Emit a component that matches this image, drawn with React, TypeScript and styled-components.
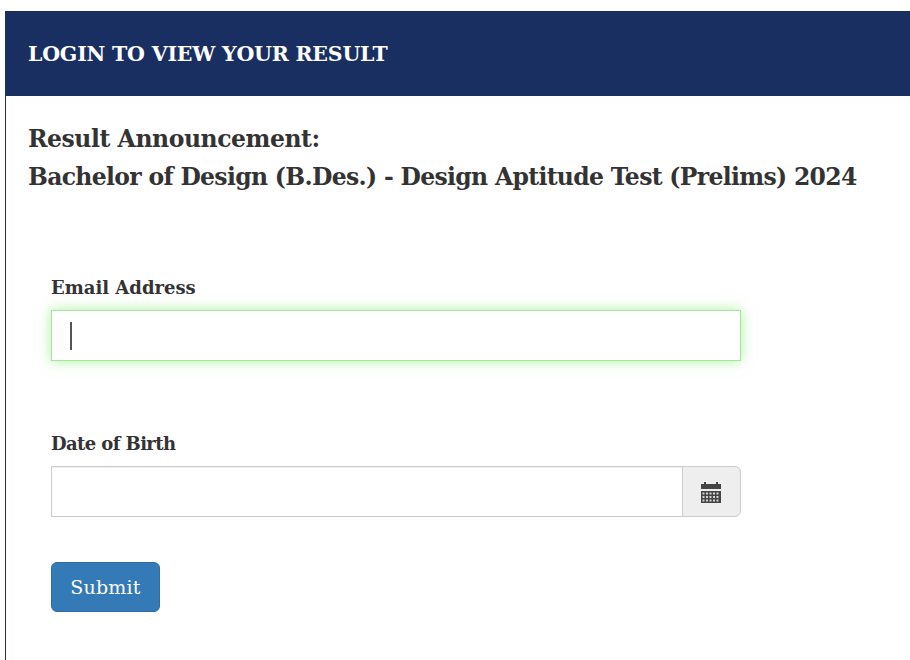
import React from 'react';
import styled, { createGlobalStyle } from 'styled-components';

const SLAB = '"DejaVu Serif", "Liberation Serif", serif';

const GlobalStyle = createGlobalStyle`
  html, body {
    margin: 0;
    padding: 0;
    background: #fff;
    overflow: hidden;
  }
  body {
    font-family: ${SLAB};
    color: #333;
  }
`;

const Page = styled.div`
  width: 910px;
  height: 660px;
  padding: 11px 0 0 5px;
  box-sizing: border-box;
  overflow: hidden;
`;

const Panel = styled.section`
  width: 920px;
  height: 660px;
  border-left: 1px solid #1b2f60;
  box-sizing: border-box;
`;

const PanelHeader = styled.h2`
  margin: 0 0 0 -1px;
  height: 85px;
  padding-left: 23px;
  display: flex;
  align-items: center;
  background: #1a2f61;
  color: #fff;
  font-size: 20.5px;
  font-weight: 700;
  letter-spacing: -0.2px;
`;

const PanelBody = styled.div`
  padding: 24px 0 0 22px;
`;

const Title = styled.h3`
  margin: 0;
  font-size: 23.5px;
  line-height: 38px;
  font-weight: 700;
  color: #333;
  white-space: nowrap;
`;

const TitleLine = styled.span<{ $tracking: number }>`
  display: block;
  letter-spacing: ${(p) => p.$tracking}px;
`;

const LoginForm = styled.form`
  padding: 79px 0 0 23px;
  width: 690px;
  display: flex;
  flex-direction: column;
`;

const Field = styled.div<{ $gap: number }>`
  margin-bottom: ${(p) => p.$gap}px;
`;

const Label = styled.label<{ $tracking: number }>`
  display: block;
  margin-bottom: 10px;
  font-size: 18px;
  line-height: 25px;
  font-weight: 700;
  letter-spacing: ${(p) => p.$tracking}px;
  color: #333;
`;

const EmailInput = styled.div`
  height: 51px;
  box-sizing: border-box;
  border: 1px solid #a3e89a;
  background: #fff;
  box-shadow: 0 0 12px rgba(102, 230, 80, 0.55);
  display: flex;
  align-items: center;
  padding-left: 18px;
`;

const Caret = styled.span`
  width: 2px;
  height: 28px;
  background: #555;
`;

const InputGroup = styled.div`
  display: flex;
  height: 51px;
`;

const DateInput = styled.div`
  flex: 1;
  box-sizing: border-box;
  border: 1px solid #ccc;
  border-right: 0;
  background: #fff;
  box-shadow: inset 0 1px 1px rgba(0, 0, 0, 0.075);
`;

const Addon = styled.span`
  width: 59px;
  box-sizing: border-box;
  border: 1px solid #ccc;
  border-radius: 0 6px 6px 0;
  background: #eee;
  display: flex;
  align-items: center;
  justify-content: center;
  padding: 2px 1px 0 0;
  color: #555;
`;

const SubmitButton = styled.button`
  width: 109px;
  height: 50px;
  padding: 0;
  border: 1px solid #2e6da4;
  border-radius: 6px;
  background: #337ab7;
  color: #fff;
  font-family: ${SLAB};
  font-size: 19px;
  letter-spacing: 0.2px;
`;

function CalendarIcon() {
  const cols = [1.5, 5, 8.5, 12, 15.5];
  const rows = [10.5, 14, 17.5];
  return (
    <svg width="20" height="21" viewBox="0 0 20 21" aria-hidden="true">
      <rect x="3" y="0" width="2" height="3" fill="#444" />
      <rect x="15" y="0" width="2" height="3" fill="#444" />
      <rect x="0" y="2" width="20" height="5" fill="#444" />
      <rect x="0" y="9" width="20" height="12" fill="#444" />
      {rows.map((y) =>
        cols.map((x) => <rect key={`${x}-${y}`} x={x} y={y} width="2" height="2" fill="#d4d4d4" />),
      )}
    </svg>
  );
}

export default function App() {
  return (
    <Page>
      <GlobalStyle />
      <Panel>
        <PanelHeader>LOGIN TO VIEW YOUR RESULT</PanelHeader>
        <PanelBody>
          <Title>
            <TitleLine $tracking={-0.45}>Result Announcement:</TitleLine>
            <TitleLine $tracking={-0.68}>Bachelor of Design (B.Des.) - Design Aptitude Test (Prelims) 2024</TitleLine>
          </Title>
          <LoginForm onSubmit={(e) => e.preventDefault()}>
            <Field $gap={70}>
              <Label $tracking={0}>Email Address</Label>
              <EmailInput>
                <Caret />
              </EmailInput>
            </Field>
            <Field $gap={45}>
              <Label $tracking={-0.6}>Date of Birth</Label>
              <InputGroup>
                <DateInput />
                <Addon>
                  <CalendarIcon />
                </Addon>
              </InputGroup>
            </Field>
            <div>
              <SubmitButton type="submit">Submit</SubmitButton>
            </div>
          </LoginForm>
        </PanelBody>
      </Panel>
    </Page>
  );
}
